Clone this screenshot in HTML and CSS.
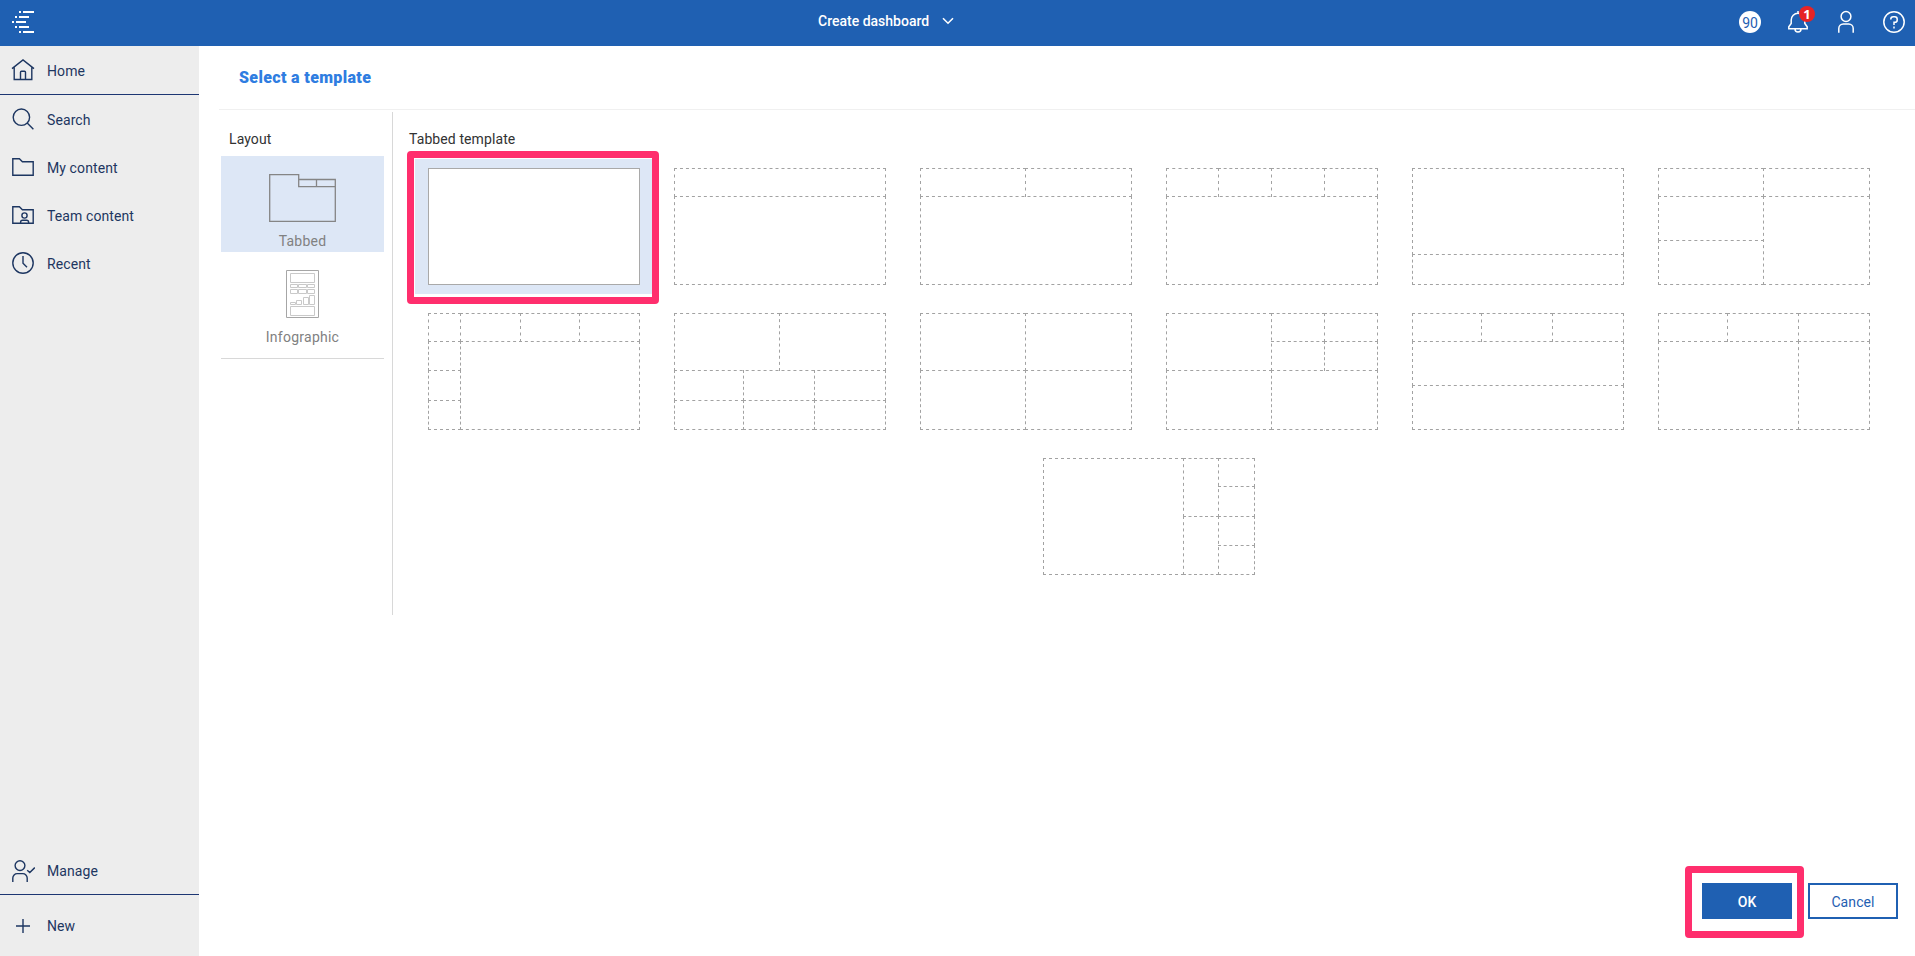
FILE: index.html
```html
<!DOCTYPE html>
<html lang="en">
<head>
<meta charset="utf-8">
<title>Create dashboard</title>
<link rel="stylesheet" href="styles.css">
</head>
<body>
<header class="topbar">
  <svg class="logo" width="24" height="24" viewBox="0 0 24 24" fill="#fff"><path d="M8 1h2v2H8zM12 1h11v2H12zM4 6h2v2H4zM8 6h10v2H8zM1 11h2v2H1zM5 11h10v2H5zM4 16h2v2H4zM8 16h10v2H8zM8 21h2v2H8zM12 21h11v2H12z"/></svg>
  <div class="topbar-title"><span>Create dashboard</span>
    <svg width="12" height="8" viewBox="0 0 12 8"><path d="M1 1.2l5 5 5-5" fill="none" stroke="#fff" stroke-width="1.6"/></svg>
  </div>
  <nav class="actions">
    <span class="trial">90</span>
    <span class="bell">
      <svg width="24" height="24" viewBox="0 0 24 24" fill="none" stroke="#fff" stroke-width="1.5"><path d="M12 1v2M2.8 18.8v-2l2.4-3.4V10a6.8 6.8 0 0 1 13.6 0v3.4l2.4 3.4v2zM9 19a3 3 0 0 0 6 0"/></svg>
      <b class="badge">1</b>
    </span>
    <svg width="24" height="24" viewBox="0 0 24 24" fill="none" stroke="#fff" stroke-width="1.5"><circle cx="12" cy="6.5" r="4.9"/><path d="M4.8 22.8v-4.3a4.5 4.5 0 0 1 4.5-4.500h5.4a4.500 4.500 0 0 1 4.500 4.500v4.300"/></svg>
    <svg width="24" height="24" viewBox="0 0 24 24" fill="none" stroke="#fff" stroke-width="1.5"><circle cx="12" cy="12" r="10.2"/><path d="M8.8 9.6V9.2a2.4 2.4 0 0 1 2.4-2.4h1.6a2.4 2.4 0 0 1 2.4 2.4v.7a2.4 2.4 0 0 1-2.4 2.4H12v2.6"/><path d="M12 16.4v2"/></svg>
  </nav>
</header>
<div class="shell">
  <aside class="sidebar">
    <a class="nav-item nav-home"><svg viewBox="0 0 24 24"><path d="M1 10.6L12 2l11 8.6M3.2 9.2v12.3h17.600V9.200M9.500 21.500v-7.200a1 1 0 0 1 1-1h3a1 1 0 0 1 1 1v7.200"/></svg><span>Home</span></a>
    <a class="nav-item"><svg viewBox="0 0 24 24"><circle cx="10.4" cy="10.2" r="8.2"/><path d="M16.2 16l6.2 6.2"/></svg><span>Search</span></a>
    <a class="nav-item"><svg viewBox="0 0 24 24"><path d="M1.8 3.7h6.6l3 3h10.8v13.6H1.8z"/></svg><span>My content</span></a>
    <a class="nav-item"><svg viewBox="0 0 24 24"><path d="M1.8 3.7h6.6l3 3h10.8v13.6H1.8z"/><circle cx="13.5" cy="12.5" r="2.6"/><path d="M9.6 20.3v-1a2 2 0 0 1 2-2h4a2 2 0 0 1 2 2v1"/></svg><span>Team content</span></a>
    <a class="nav-item"><svg viewBox="0 0 24 24"><circle cx="12" cy="12" r="10.2"/><path d="M12 5v7.200l4 4"/></svg><span>Recent</span></a>
    <a class="nav-item nav-manage"><svg viewBox="0 0 24 24"><circle cx="9" cy="6.6" r="4.9"/><path d="M1.8 23v-4a4.400 4.400 0 0 1 4.400-4.400h5.600a4.400 4.400 0 0 1 4.400 4.400v4M16.200 11.200l2.600 2.400 5-5"/></svg><span>Manage</span></a>
    <a class="nav-item nav-new"><svg viewBox="0 0 24 24"><path d="M12 5v14M5 12h14"/></svg><span>New</span></a>
  </aside>
  <main class="main">
    <h1 class="title">Select a template</h1>
    <div class="panes">
      <section class="layouts">
        <h2 class="label">Layout</h2>
        <div class="layout-option selected">
          <svg width="67" height="48" viewBox="0 0 67 48" fill="none" stroke="#858585" stroke-width="1.3"><path d="M.7.7h29v12h36.6v34.6H.7zM29.7 5.5h36.6v7.2M47.5 5.5v7.2"/></svg>
          <span>Tabbed</span>
        </div>
        <div class="layout-option">
          <svg width="33" height="48" viewBox="0 0 33 48" fill="none" stroke="#c9c9c9"><path d="M.5.5h32v47H.5z" stroke="#a6a6a6"/><path d="M4.500 3.500h24v9h-24zM4.500 14.500h7v3h-7zM12.500 14.500h8v3h-8zM21.500 14.500h7v3h-7zM4.500 19.500h7v4h-7zM12.500 19.500h8v4h-8zM21.500 19.500h7v4h-7zM4.500 32.500h5v2h-5zM10.500 30.500h5v4h-5zM17.500 27.500h5v7h-5zM23.500 25.500h5v9h-5zM4.500 36.500h24v9h-24z"/></svg>
          <span>Infographic</span>
        </div>
      </section>
      <section class="templates">
        <h2 class="label">Tabbed template</h2>
        <div class="template-grid" id="templates"></div>
      </section>
    </div>
    <footer class="buttons">
      <button class="btn primary">OK<i class="callout callout-ok"></i></button>
      <button class="btn">Cancel</button>
    </footer>
  </main>
</div>
<script src="templates.js"></script>
</body>
</html>
```
FILE: templates.js
```js
// Inner divider lines of each template: [x1, y1, x2, y2], in a 211 x 116 frame.
const W = 211, H = 116;
const templates = [
  [],
  [[0,28,W,28]],
  [[0,28,W,28],[105,0,105,28]],
  [[0,28,W,28],[52,0,52,28],[105,0,105,28],[158,0,158,28]],
  [[0,86,W,86]],
  [[0,28,105,28],[105,28,W,28],[105,0,105,28],[105,28,105,H],[0,72,105,72]],
  [[0,28,32,28],[32,28,W,28],[32,0,32,28],[32,28,32,57],[32,57,32,87],[32,87,32,H],[92,0,92,28],[151,0,151,28],[0,57,32,57],[0,87,32,87]],
  [[105,0,105,57],[0,57,W,57],[69,57,69,87],[69,87,69,H],[140,57,140,87],[140,87,140,H],[0,87,69,87],[69,87,140,87],[140,87,W,87]],
  [[105,0,105,57],[105,57,105,H],[0,57,105,57],[105,57,W,57]],
  [[105,0,105,57],[105,57,105,H],[0,57,105,57],[105,57,W,57],[105,28,158,28],[158,28,W,28],[158,0,158,28],[158,28,158,57]],
  [[69,0,69,28],[140,0,140,28],[0,28,W,28],[0,72,W,72]],
  [[69,0,69,28],[140,0,140,28],[140,28,140,H],[0,28,140,28],[140,28,W,28]],
  [[140,0,140,58],[140,58,140,H],[175,0,175,58],[175,58,175,H],[175,28,W,28],[140,58,175,58],[175,58,W,58],[175,87,W,87]]
];

// A dashed line that begins and ends on a full dash.
function dashed([x1, y1, x2, y2]) {
  const length = Math.abs(x2 - x1) + Math.abs(y2 - y1) + 1;
  const count = Math.round((length - 3) / 6);
  const gap = (length - 3) / count - 3;
  const d = y1 === y2 ? `M${x1} ${y1 + 0.5}H${x2 + 1}` : `M${x1 + 0.5} ${y1}V${y2 + 1}`;
  return `<path d="${d}" stroke-dasharray="3 ${gap}"/>`;
}

// Splits an edge at the positions where a divider meets it.
function splitEdge(stops, end, line) {
  const points = [...new Set([0, ...stops, end])].sort((a, b) => a - b);
  return points.slice(1).map((p, i) => line(points[i], p));
}

function draw(lines) {
  const meet = (edge, at) => lines.flatMap(([x1, y1, x2, y2]) =>
    edge === "y"
      ? (x1 === x2 && (y1 === at || y2 === at) ? [x1] : [])
      : (y1 === y2 && (x1 === at || x2 === at) ? [y1] : []));
  const edges = [
    ...splitEdge(meet("y", 0), W, (a, b) => [a, 0, b, 0]),
    ...splitEdge(meet("y", H), W, (a, b) => [a, H, b, H]),
    ...splitEdge(meet("x", 0), H, (a, b) => [0, a, 0, b]),
    ...splitEdge(meet("x", W), H, (a, b) => [W, a, W, b])
  ];
  return `<svg class="preview" viewBox="0 0 212 117">${[...edges, ...lines].map(dashed).join("")}</svg>`;
}

document.getElementById("templates").innerHTML = templates.map((lines, i) =>
  i === 0
    ? '<div class="template chosen"><div class="blank"></div><i class="callout callout-template"></i></div>'
    : `<div class="template">${draw(lines)}</div>`
).join("");
```
FILE: styles.css
```css
* { box-sizing: border-box; }
body {
  margin: 0;
  height: 956px;
  display: flex;
  flex-direction: column;
  overflow: hidden;
  background: #fff;
  font: 14px/20px Roboto, "Liberation Sans", sans-serif;
  letter-spacing: 0.1px;
  color: #323232;
}
svg { display: block; flex: none; }

.topbar {
  height: 46px;
  flex: none;
  display: grid;
  grid-template-columns: 807px auto 1fr;
  align-items: center;
  padding: 0 9px 2px 11px;
  background: #1f60b2;
  color: #fff;
}
.topbar-title {
  display: flex;
  align-items: center;
  gap: 13px;
  padding-bottom: 2px;
  font-weight: 500;
  letter-spacing: 0;
}
.actions { display: flex; justify-content: flex-end; align-items: center; gap: 24px; }
.trial {
  width: 22px;
  height: 22px;
  margin-right: 1px;
  border-radius: 50%;
  background: #fff;
  color: #1f60b2;
  line-height: 24px;
  text-align: center;
  letter-spacing: 0;
}
.bell { position: relative; }
.badge {
  position: absolute;
  left: 13px;
  top: -4px;
  width: 16px;
  height: 16px;
  border-radius: 50%;
  background: #e62325;
  font: bold 13px/17px "Noto Sans", sans-serif;
  letter-spacing: 0;
  text-align: center;
}

.shell { flex: 1; display: flex; min-height: 0; }
.sidebar {
  width: 199px;
  flex: none;
  display: flex;
  flex-direction: column;
  background: #ededed;
  color: #1d3661;
}
.nav-item {
  height: 48px;
  flex: none;
  display: flex;
  align-items: center;
  gap: 12px;
  padding-left: 11px;
}
.nav-item svg { width: 24px; height: 24px; fill: none; stroke: #1d3661; stroke-width: 1.4; }
.nav-item span { padding-top: 2px; }
.nav-home { height: 49px; border-bottom: 1px solid #1d3673; }
.nav-manage { margin-top: auto; border-bottom: 1px solid #1d3673; }
.nav-manage span { padding-top: 0; }
.nav-new { height: 61px; padding-top: 1px; }
.nav-new span { padding: 0; }

.main { flex: 1; display: flex; flex-direction: column; padding-left: 20px; }
.title {
  height: 64px;
  margin: 0;
  padding-left: 20px;
  border-bottom: 1px solid #f0f0f0;
  font-size: 16px;
  line-height: 63px;
  font-weight: 900;
  letter-spacing: 0.35px;
  color: #2f7de1;
}
.panes { display: flex; height: 503px; margin-top: 2px; }
.label { margin: 0; font-size: 14px; font-weight: 400; line-height: 20px; }
.layouts { width: 174px; border-right: 1px solid #d8d8d8; padding: 17px 8px 0 2px; }
.layouts .label { padding-left: 8px; margin-bottom: 7px; }
.layout-option {
  height: 96px;
  display: flex;
  flex-direction: column;
  align-items: center;
  justify-content: space-between;
  padding: 18px 0 1px;
  color: #818181;
  letter-spacing: 0.25px;
}
.layout-option.selected { background: #dde7f6; }
.layout-option:last-child { height: 107px; padding-bottom: 11px; border-bottom: 1px solid #d8d8d8; }

.templates { flex: 1; padding: 17px 0 0 16px; }
.template-grid {
  display: flex;
  flex-wrap: wrap;
  justify-content: center;
  gap: 10px 8px;
  width: 1468px;
  margin: 10px 0 0 6px;
}
.template { position: relative; width: 238px; height: 135px; padding: 9px 13px; }
.template.chosen { background: #dde7f6; }
.blank { width: 212px; height: 117px; border: 1px solid #a9a9a9; background: #fff; }
.preview { width: 212px; height: 117px; fill: none; stroke: #a2a2a2; stroke-width: 1; }

.callout { position: absolute; border: 7px solid #ff2e6d; border-radius: 4px; }
.callout-template { left: -8px; top: -8px; width: 252px; height: 153px; }
.callout-ok { left: -17px; top: -17px; width: 119px; height: 72px; }

.buttons { display: flex; justify-content: flex-end; gap: 16px; margin: auto 17px 37px 0; }
.btn {
  position: relative;
  width: 90px;
  height: 36px;
  padding: 2px 0 0;
  border: 2px solid #1f60b2;
  background: #fff;
  color: #1f60b2;
  font: inherit;
  letter-spacing: 0.1px;
}
.btn.primary { border: 0; background: #1f60b2; color: #fff; font-weight: 500; }
```
